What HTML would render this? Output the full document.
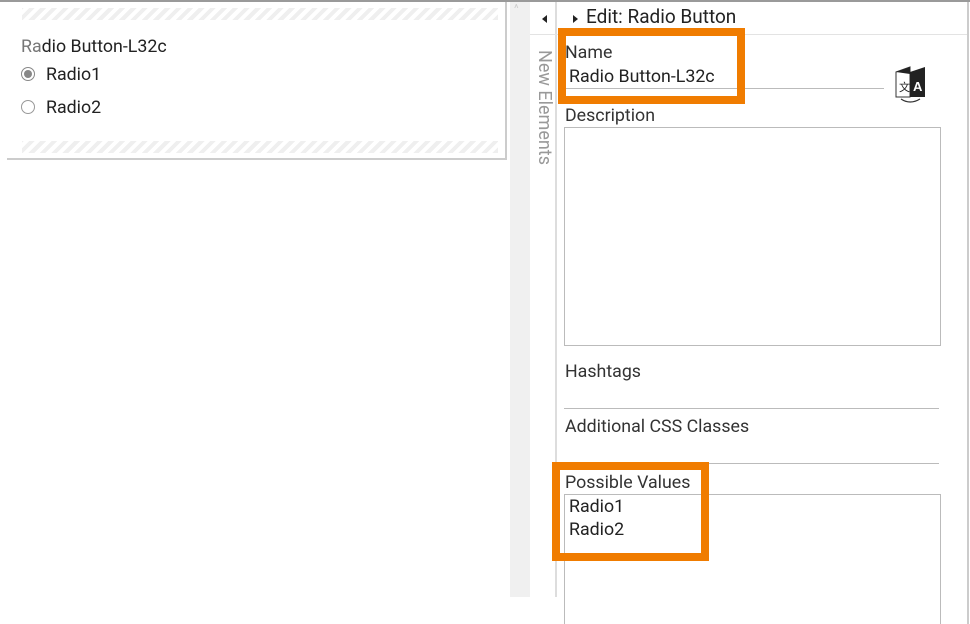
<!DOCTYPE html>
<html><head><meta charset="utf-8">
<style>
*{margin:0;padding:0;box-sizing:border-box}
html,body{width:970px;height:624px;overflow:hidden}
body{background:#fff;position:relative;font-family:"Roboto","Liberation Sans",sans-serif;color:#222}
.abs{position:absolute}
.hatch{background:repeating-linear-gradient(-45deg,#efefef 0 4px,#fff 4px 8px)}
.t{font-size:17.8px;white-space:nowrap}
</style></head><body>
<div class="abs" style="left:0;top:0;width:970px;height:2px;background:#9a9a9a"></div>
<div class="abs" style="left:7px;top:2px;width:500px;height:158px;border-right:2px solid #ccc;border-bottom:2px solid #ccc;background:#fff"></div>
<div class="abs hatch" style="left:22px;top:8px;width:476px;height:12px"></div>
<div class="abs hatch" style="left:22px;top:141px;width:476px;height:12px"></div>
<div class="abs t" style="left:21px;top:36px;color:#222"><span style="color:#777">Ra</span>dio Button-L32c</div>
<div class="abs" style="left:21px;top:67px;width:14px;height:14px;border-radius:50%;border:1px solid #888;background:#fff"></div>
<div class="abs" style="left:24px;top:70px;width:8px;height:8px;border-radius:50%;background:#888"></div>
<div class="abs t" style="left:46px;top:64px">Radio1</div>
<div class="abs" style="left:21px;top:100px;width:14px;height:14px;border-radius:50%;border:1px solid #999;background:#fff"></div>
<div class="abs t" style="left:46px;top:97px">Radio2</div>
<div class="abs" style="left:510px;top:2px;width:20px;height:595px;background:#f0f0f0"></div>
<div class="abs" style="left:514px;top:2px;color:#ccc;font-size:11px">^</div>
<div class="abs" style="left:530px;top:2px;width:27px;height:622px;border-right:2px solid #ddd"></div>
<div class="abs" style="left:530px;top:34px;width:27px;height:1px;background:#e3e3e3"></div>
<div class="abs" style="left:542px;top:15px;width:0;height:0;border-top:4px solid transparent;border-bottom:4px solid transparent;border-right:5px solid #222"></div>
<div class="abs" style="left:534px;top:50px;writing-mode:vertical-rl;font-size:18px;color:#999;white-space:nowrap">New Elements</div>
<div class="abs" style="left:967px;top:2px;width:2px;height:622px;background:#ccc"></div>
<div class="abs" style="left:557px;top:34px;width:410px;height:1px;background:#e3e3e3"></div>
<div class="abs" style="left:573px;top:15px;width:0;height:0;border-top:4px solid transparent;border-bottom:4px solid transparent;border-left:5px solid #222"></div>
<div class="abs" style="left:586px;top:5px;font-size:19px;color:#222;white-space:nowrap">Edit: Radio Button</div>
<div class="abs t" style="left:565px;top:42px;color:#333">Name</div>
<div class="abs t" style="left:569px;top:66px">Radio Button-L32c</div>
<div class="abs" style="left:564px;top:88px;width:320px;height:1px;background:#bbb"></div>
<svg class="abs" style="left:893px;top:64px" width="36" height="40" viewBox="0 0 36 40">
<path d="M3 8 L17 3 L17 33 L3 33 Z" fill="#fff" stroke="#333" stroke-width="1"/>
<path d="M3 8 L17 3 L17 10 Z" fill="#222"/>
<path d="M17 8 L32 3 L32 33 L17 33 Z" fill="#222"/>
<text x="6" y="27" font-size="11" fill="#222" font-family="Noto Sans CJK SC,sans-serif">文</text>
<text x="20" y="27" font-size="13" font-weight="bold" fill="#fff" font-family="Liberation Sans,sans-serif">A</text>
<path d="M8 35 Q17 41 27 35" fill="none" stroke="#333" stroke-width="1.2"/>
</svg>
<div class="abs t" style="left:565px;top:105px;color:#333">Description</div>
<div class="abs" style="left:564px;top:127px;width:377px;height:219px;border:1px solid #bbb"></div>
<div class="abs t" style="left:565px;top:361px;color:#333">Hashtags</div>
<div class="abs" style="left:564px;top:408px;width:375px;height:1px;background:#bbb"></div>
<div class="abs t" style="left:565px;top:416px;color:#333">Additional CSS Classes</div>
<div class="abs" style="left:564px;top:463px;width:375px;height:1px;background:#bbb"></div>
<div class="abs t" style="left:565px;top:472px;color:#333">Possible Values</div>
<div class="abs" style="left:564px;top:494px;width:377px;height:140px;border:1px solid #bbb"></div>
<div class="abs t" style="left:569px;top:496px">Radio1</div>
<div class="abs t" style="left:569px;top:519px">Radio2</div>
<div class="abs" style="left:558px;top:28px;width:187px;height:76px;border:8px solid #f07c00"></div>
<div class="abs" style="left:552px;top:462px;width:157px;height:99px;border:8px solid #f07c00"></div>
<div class="abs" style="left:0;top:597px;width:557px;height:27px;background:#fff"></div>
</body></html>
